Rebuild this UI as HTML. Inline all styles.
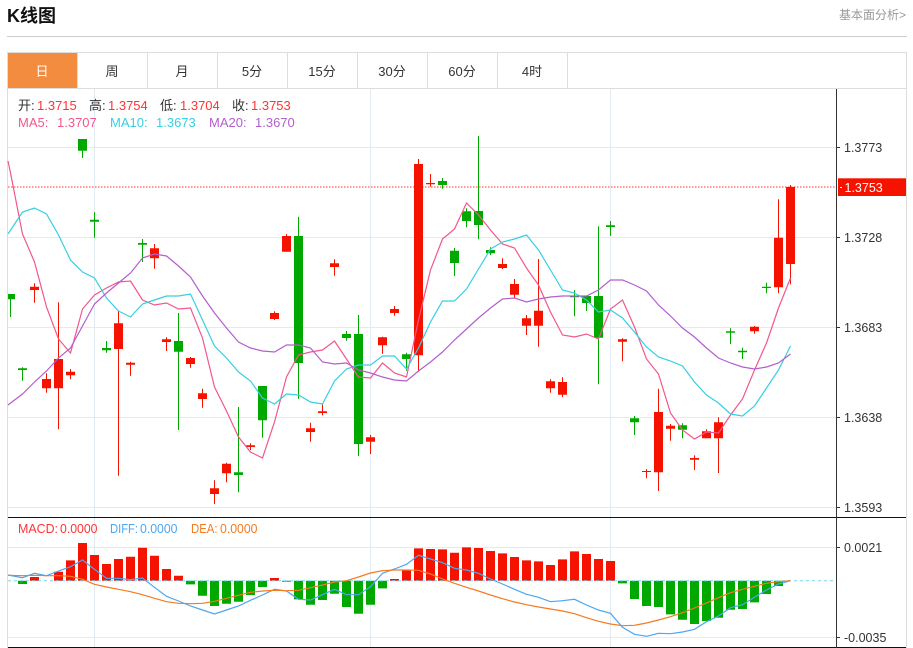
<!DOCTYPE html>
<html><head><meta charset="utf-8"><style>
html,body{margin:0;padding:0;background:#fff;overflow:hidden}
svg{display:block;font-family:"Liberation Sans","Noto Sans CJK SC",sans-serif}
</style></head><body>
<svg width="913" height="648" viewBox="0 0 913 648" xmlns="http://www.w3.org/2000/svg">
<defs><clipPath id="c"><rect x="8" y="89" width="828" height="558"/></clipPath></defs>
<text x="7" y="22" font-size="18" font-weight="bold" fill="#111">K线图</text>
<text x="839" y="19" font-size="12" fill="#999">基本面分析&gt;</text>
<path d="M7 36.5H907" stroke="#ccc" fill="none"/>
<path d="M7.5 648V52.5H906.5V648M7 88.5H907" stroke="#ddd" fill="none"/>
<rect x="8" y="53" width="69" height="35" fill="#f48c3f"/>
<path d="M77.5 53V88M147.5 53V88M217.5 53V88M287.5 53V88M357.5 53V88M427.5 53V88M497.5 53V88M567.5 53V88" stroke="#ddd" fill="none"/>
<g font-size="13" text-anchor="middle" fill="#333">
<text x="42" y="76" fill="#fff">日</text><text x="112" y="76">周</text><text x="182" y="76">月</text><text x="252" y="76">5分</text><text x="322" y="76">15分</text><text x="392" y="76">30分</text><text x="462" y="76">60分</text><text x="532" y="76">4时</text>
</g>
<!-- grid -->
<path d="M94.5 89V647M370.5 89V647M610.5 89V647M8 147.5H836M8 237.5H836M8 327.5H836M8 417.5H836M8 507.5H836M8 547.5H836M8 637.5H836" stroke="#e3ebf2" fill="none"/>
<!-- last price -->
<path d="M8 187H836" stroke="#f33" stroke-dasharray="1.5 1.5" fill="none"/>
<g clip-path="url(#c)">
<!-- wicks -->
<path fill="none" stroke="#f51300" d="M34.5 283.3V302.7M46.5 373.3V392.7M58.5 302.3V429.3M70.5 369V379.3M118.5 311V475.7M130.5 361.7V375.7M154.5 244V268.7M166.5 337.3V351M190.5 357V367.7M202.5 388.7V407.7M214.5 480.3V504M226.5 462.7V482.3M250.5 443.3V450M274.5 311.3V320M286.5 234V251.7M310.5 422.7V441.7M322.5 404V415.3M334.5 259.3V275.7M370.5 435V454M382.5 336.7V353.7M394.5 306V315.7M418.5 159V371.7M430.5 174V186.7M502.5 258.3V269M514.5 279V298.3M526.5 315V335M538.5 259V346.7M550.5 379.3V392.7M562.5 377.3V397M622.5 338.3V361.3M646.5 469.3V478.3M658.5 388.7V491M670.5 424V440.7M694.5 455.3V470M706.5 429.3V438.3M718.5 417.3V473M754.5 326V333.7M778.5 199.3V293.3M790.5 185V284.3"/>
<path fill="none" stroke="#f51300" stroke-width="9" d="M34.5 286.7V290M46.5 379V388.3M58.5 359V388.3M70.5 371.7V375.3M118.5 323.3V349M130.5 362.7V364.7M154.5 248.3V258.3M166.5 339.3V342M190.5 358V364M202.5 393.3V399M214.5 488.3V494M226.5 463.7V473.3M250.5 445.3V447M274.5 313V319M286.5 236V251.7M310.5 428.3V432M322.5 411.3V413M334.5 263.3V267M370.5 437.3V441.7M382.5 337.3V345.3M394.5 309V313M418.5 164V355.3M430.5 183V184.3M502.5 264V268M514.5 284V294.7M526.5 318.3V325.7M538.5 310.7V325.7M550.5 381.3V388.3M562.5 382V394.7M622.5 339.3V341.7M646.5 471V472M658.5 412V472.3M670.5 425.7V428.7M694.5 458V459.7M706.5 431.3V438.3M718.5 422.3V438.3M754.5 326.7V331.3M778.5 237.7V287.3M790.5 187V264"/>
<path fill="none" stroke="#00a800" d="M10.5 294V317M22.5 367.3V380.7M82.5 139V158M94.5 212.3V237.7M106.5 341V352.7M142.5 239V262M178.5 313V430M238.5 407V492.3M262.5 386V437.7M298.5 216.7V398.7M346.5 331V340.7M358.5 315V456M406.5 352.7V370.7M442.5 178V188.7M454.5 248V276M466.5 208.3V227.3M478.5 136V239.3M490.5 247.3V255M574.5 290.3V316.3M586.5 296V311M598.5 226.3V384.3M610.5 221V235.7M634.5 416V435M682.5 423.3V438.3M730.5 328.3V344M742.5 347.7V359M766.5 282.7V293.3"/>
<path fill="none" stroke="#00a800" stroke-width="9" d="M10.5 294V299.3M22.5 368.3V370M82.5 139V150.7M94.5 219.7V221.7M106.5 348V350.3M142.5 243V244.7M178.5 341V351.7M238.5 472.3V475M262.5 386V420.3M298.5 236V363M346.5 334V338M358.5 334V444M406.5 354.3V359M442.5 181V185M454.5 250.7V263M466.5 211.3V221M478.5 211V225M490.5 250V253.3M574.5 295.7V297.3M586.5 296V303M598.5 296V337.7M610.5 225.3V227M634.5 418.3V422.3M682.5 425.3V429.7M730.5 331.3V332.7M742.5 350.7V352.3M766.5 286.7V288"/>
</g>
<!-- MA lines -->
<polyline fill="none" stroke="#f2578d" stroke-width="1.2" points="8,161 10.5,173 22.5,234 34.5,262 46.5,307 58.5,339 70.5,353 82.5,309 94.5,295 106.5,288 118.5,282 130.5,281 142.5,300 154.5,305 166.5,303 178.5,309 190.5,308 202.5,338 214.5,387 226.5,411 238.5,437 250.5,452 262.5,458 274.5,422 286.5,377 298.5,355 310.5,352 322.5,350 334.5,341 346.5,359 358.5,377 370.5,378 382.5,363 394.5,373 406.5,377 418.5,320 430.5,270 442.5,239 454.5,229 466.5,203 478.5,215 490.5,230 502.5,244 514.5,248 526.5,268 538.5,285 550.5,312 562.5,335 574.5,337 586.5,334 598.5,339 610.5,309 622.5,300 634.5,327 646.5,359 658.5,374 670.5,413 682.5,430 694.5,439 706.5,432 718.5,433 730.5,415 742.5,399 754.5,370 766.5,343 778.5,308 790.5,278"/>
<polyline fill="none" stroke="#36cfe3" stroke-width="1.2" points="8,234 22.5,212 34.5,208 46.5,214 58.5,235 70.5,260 82.5,272 94.5,278 106.5,298 118.5,311 130.5,317 142.5,304 154.5,300 166.5,296 178.5,296 190.5,294 202.5,320 214.5,346 226.5,358 238.5,372 250.5,381 262.5,398 274.5,404 286.5,394 298.5,395 310.5,402 322.5,404 334.5,381 346.5,369 358.5,365 370.5,365 382.5,356 394.5,356 406.5,369 418.5,348 430.5,322 442.5,301 454.5,301 466.5,289 478.5,269 490.5,249 502.5,242 514.5,239 526.5,235 538.5,250 550.5,270 562.5,290 574.5,293 586.5,300 598.5,312 610.5,310 622.5,318 634.5,332 646.5,347 658.5,357 670.5,361 682.5,366 694.5,382 706.5,395 718.5,403 730.5,414 742.5,416 754.5,406 766.5,388 778.5,370 790.5,346"/>
<polyline fill="none" stroke="#b35fcc" stroke-width="1.2" points="8,405 22.5,394 34.5,382 46.5,371 58.5,358 70.5,348 82.5,326 94.5,304 106.5,293 118.5,283 130.5,273 142.5,258 154.5,254 166.5,256 178.5,266 190.5,277 202.5,296 214.5,313 226.5,328 238.5,342 250.5,348 262.5,351 274.5,352 286.5,345 298.5,345 310.5,348 322.5,362 334.5,364 346.5,363 358.5,370 370.5,373 382.5,377 394.5,380 406.5,381 418.5,371 430.5,362 442.5,352 454.5,340 466.5,329 478.5,318 490.5,308 502.5,299 514.5,298 526.5,302 538.5,299 550.5,297 562.5,296 574.5,296 586.5,296 598.5,290 610.5,280 622.5,280 634.5,285 646.5,291 658.5,305 670.5,316 682.5,328 694.5,337 706.5,348 718.5,358 730.5,363 742.5,367 754.5,369 766.5,367 778.5,363 790.5,354"/>
<!-- info text -->
<g font-size="13">
<g fill="#333"><text x="18" y="110">开:</text><text x="89" y="110">高:</text><text x="160" y="110">低:</text><text x="232" y="110">收:</text></g>
<g fill="#f33"><text x="37" y="110">1.3715</text><text x="108" y="110">1.3754</text><text x="180" y="110">1.3704</text><text x="251" y="110">1.3753</text></g>
<g fill="#f2578d"><text x="18" y="127">MA5:</text><text x="57" y="127">1.3707</text></g>
<g fill="#36cfe3"><text x="110" y="127">MA10:</text><text x="156" y="127">1.3673</text></g>
<g fill="#b35fcc"><text x="209" y="127">MA20:</text><text x="255" y="127">1.3670</text></g>
<g fill="#f33"><text x="18" y="533" textLength="40" lengthAdjust="spacingAndGlyphs">MACD:</text><text x="60" y="533" textLength="37.5" lengthAdjust="spacingAndGlyphs">0.0000</text></g>
<g fill="#4da6f2"><text x="110" y="533" textLength="28" lengthAdjust="spacingAndGlyphs">DIFF:</text><text x="140" y="533" textLength="37.5" lengthAdjust="spacingAndGlyphs">0.0000</text></g>
<g fill="#f57a20"><text x="191" y="533" textLength="26.5" lengthAdjust="spacingAndGlyphs">DEA:</text><text x="220" y="533" textLength="37.5" lengthAdjust="spacingAndGlyphs">0.0000</text></g>
</g>
<!-- MACD bars -->
<path fill="none" stroke="#f51300" stroke-width="9" d="M34.5 580.7V577M58.5 580.7V571.7M70.5 580.7V560.4M82.5 580.7V543M94.5 580.7V555M106.5 580.7V564M118.5 580.7V559M130.5 580.7V556.7M142.5 580.7V547.7M154.5 580.7V555.7M166.5 580.7V569M178.5 580.7V575.7M274.5 580.7V578M394.5 580.7V579M406.5 580.7V570M418.5 580.7V548.4M430.5 580.7V549M442.5 580.7V549.4M454.5 580.7V552.7M466.5 580.7V547.4M478.5 580.7V548M490.5 580.7V551M502.5 580.7V553.4M514.5 580.7V557M526.5 580.7V560.4M538.5 580.7V561.4M550.5 580.7V565M562.5 580.7V559.4M574.5 580.7V551.4M586.5 580.7V554M598.5 580.7V559M610.5 580.7V561"/>
<path fill="none" stroke="#00a800" stroke-width="9" d="M22.5 580.7V584M190.5 580.7V584.4M202.5 580.7V595.7M214.5 580.7V606M226.5 580.7V603.7M238.5 580.7V601.7M250.5 580.7V595M262.5 580.7V587M286.5 580.7V581.7M298.5 580.7V599.4M310.5 580.7V604.7M322.5 580.7V600M334.5 580.7V593.7M346.5 580.7V607M358.5 580.7V613.7M370.5 580.7V604.7M382.5 580.7V588.4M622.5 580.7V583.4M634.5 580.7V599M646.5 580.7V606M658.5 580.7V607M670.5 580.7V614.4M682.5 580.7V619.7M694.5 580.7V624M706.5 580.7V621M718.5 580.7V617.7M730.5 580.7V609.7M742.5 580.7V609M754.5 580.7V602.4M766.5 580.7V594M778.5 580.7V586"/>
<path d="M8 580.7H836" stroke="#7fd4ef" stroke-dasharray="3 3" fill="none"/>
<polyline fill="none" stroke="#4da6f2" stroke-width="1.2" points="8,575 22.5,577.7 34.5,573.3 46.5,575.7 58.5,571 70.5,566.7 82.5,560 94.5,569.3 106.5,578.3 118.5,578.3 130.5,579.7 142.5,578 154.5,587.3 166.5,596.3 178.5,601 190.5,606 202.5,610 214.5,614 226.5,610 238.5,606 250.5,600.3 262.5,595 274.5,589.3 286.5,591 298.5,599.3 310.5,600 322.5,594.7 334.5,589.3 346.5,594.7 358.5,594.7 370.5,586.7 382.5,573.3 394.5,569 406.5,564.3 418.5,555.3 430.5,559 442.5,562.7 454.5,568.3 466.5,570 478.5,573.3 490.5,579 502.5,584 514.5,589.3 526.5,594.3 538.5,597.3 550.5,601.7 562.5,600.7 574.5,599.3 586.5,605 598.5,610 610.5,613.3 622.5,627.3 634.5,634.3 646.5,636.3 658.5,633.3 670.5,633.7 682.5,632 694.5,629.3 706.5,621.7 718.5,616 730.5,607.7 742.5,604.7 754.5,597.3 766.5,590 778.5,584 790.5,580.7"/>
<polyline fill="none" stroke="#f57a20" stroke-width="1.2" points="8,575.3 22.5,575.7 34.5,575.3 46.5,575.7 58.5,575.7 70.5,576.3 82.5,579.3 94.5,584.3 106.5,587 118.5,589.3 130.5,591.7 142.5,594.7 154.5,598.3 166.5,601.7 178.5,603.3 190.5,603.7 202.5,603.3 214.5,601.3 226.5,598.3 238.5,595.3 250.5,592.3 262.5,591 274.5,590.3 286.5,590.7 298.5,590.3 310.5,587.7 322.5,585 334.5,582 346.5,580.7 358.5,577 370.5,573 382.5,570.7 394.5,570 406.5,570 418.5,570.3 430.5,574 442.5,579 454.5,583.3 466.5,587.3 478.5,591 490.5,595 502.5,598.7 514.5,602 526.5,604.7 538.5,607 550.5,609 562.5,611 574.5,613.7 586.5,617.7 598.5,621.3 610.5,624 622.5,625.7 634.5,625.3 646.5,623 658.5,620 670.5,616.7 682.5,612.7 694.5,608 706.5,603 718.5,597.7 730.5,592.7 742.5,589.3 754.5,586.3 766.5,583.3 778.5,581.7 790.5,580.7"/>
<!-- axes -->
<path d="M8 517.5H906M8 647.5H906" stroke="#111" fill="none"/>
<path d="M836.5 89V648M836 147.5H840M836 237.5H840M836 327.5H840M836 417.5H840M836 507.5H840M836 547.5H840M836 637.5H840" stroke="#333" fill="none"/>
<rect x="838" y="178.3" width="68" height="17.7" fill="#f51300"/>
<path d="M840 187.5H842" stroke="#fff" fill="none"/>
<g font-size="12.5" fill="#333">
<text x="844" y="152">1.3773</text><text x="844" y="242">1.3728</text><text x="844" y="332">1.3683</text><text x="844" y="422">1.3638</text><text x="844" y="512">1.3593</text><text x="844" y="552">0.0021</text><text x="844" y="642">-0.0035</text>
<text x="844.5" y="192" fill="#fff">1.3753</text>
</g>
</svg>
</body></html>
